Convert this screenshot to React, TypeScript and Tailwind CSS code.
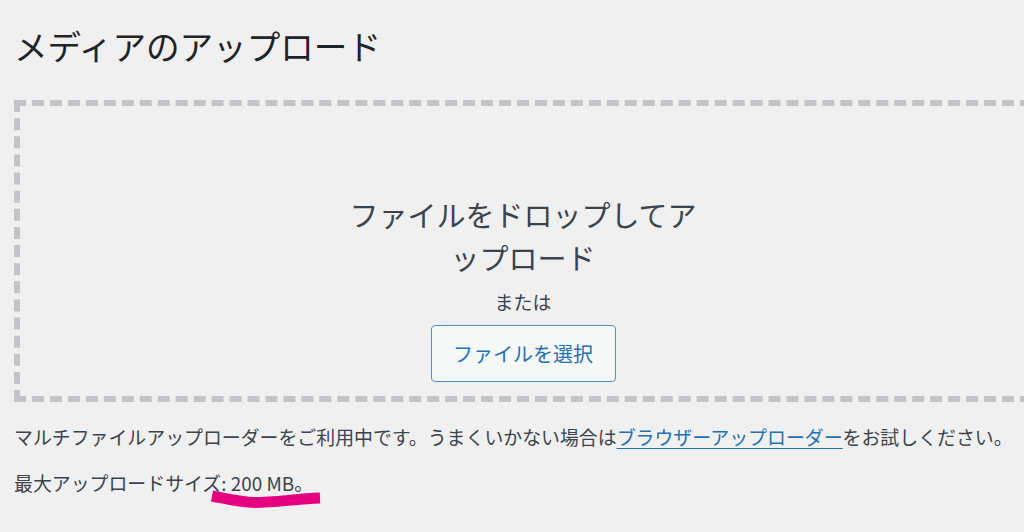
export default function App(): JSX.Element {
  return (
    <div
      className="relative w-[1024px] h-[532px] overflow-hidden bg-[#f0f0f1] text-[#3c434a]"
      style={{ fontFamily: '"Noto Sans CJK JP", "Noto Sans", sans-serif' }}
    >
      {/* 見出し */}
      <h1 className="pl-[14px] pt-[23px] text-[33.6px] leading-[46px] font-normal text-[#1d2327]">
        メディアのアップロード
      </h1>

      {/* ドロップエリア */}
      <div className="mt-[31px] ml-[14px] w-[1018px] h-[302px] border-[6px] border-dashed border-[#c3c4c7] flex flex-col items-center pt-[87px]">
        <p className="text-[29px] leading-[43px] text-center text-[#3c434a]">
          ファイルをドロップしてア
          <br />
          ップロード
        </p>
        <p className="mt-[9px] text-[19px] leading-[28px]">または</p>
        <button className="mt-[9px] w-[185px] h-[57px] border border-[#4f8fc9] rounded-[4px] bg-[#f6f7f7] text-[#2271b1] text-[20px]">
          ファイルを選択
        </button>
      </div>

      {/* 説明 */}
      <p className="mt-[21px] pl-[14px] text-[18.9px] leading-[28px] whitespace-nowrap">
        マルチファイルアップローダーをご利用中です。うまくいかない場合は
        <a href="#" className="text-[#2271b1] underline underline-offset-[3px]">
          ブラウザーアップローダー
        </a>
        をお試しください。
      </p>
      <p className="mt-[18px] pl-[14px] text-[18.9px] leading-[28px]">最大アップロードサイズ: 200 MB。</p>

      {/* マーカー */}
      <svg className="absolute left-0 top-0 pointer-events-none" width="1024" height="532">
        <path
          d="M212 496 C 228 499, 240 502.5, 255 502.5 C 275 502.5, 295 499, 320 498"
          stroke="#e5007f"
          strokeWidth="11"
          fill="none"
          strokeLinecap="butt"
        />
      </svg>
    </div>
  );
}
